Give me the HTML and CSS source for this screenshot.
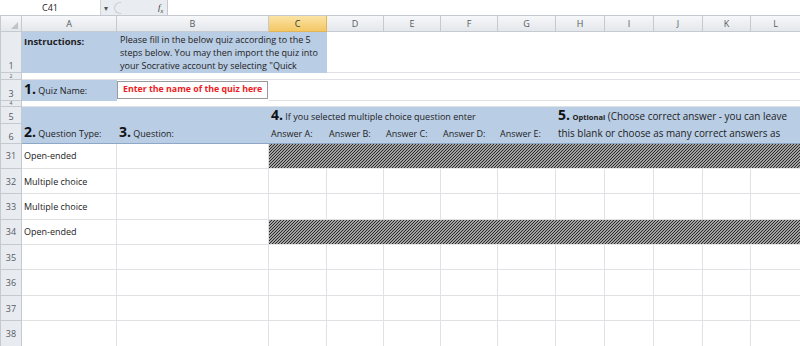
FILE: index.html
```html
<!DOCTYPE html>
<html lang="en">
<head>
    <meta charset="UTF-8">
    <title>Socrative Quiz Template</title>
    <link rel="stylesheet" href="styles.css">
</head>
<body>
    <div class="formula-bar">
        <div class="name-box">C41</div>
        <div class="name-drop">&#9662;</div>
        <div class="fx-area">
            <span class="fx-grip"></span>
            <span class="fx">f<sub>x</sub></span>
        </div>
        <div class="formula-input"></div>
    </div>

    <!-- shared hatch fill for the "not used" answer cells -->
    <svg class="defs" width="0" height="0">
        <defs>
            <pattern id="hatch" width="3" height="3" patternUnits="userSpaceOnUse">
                <rect width="3" height="3" fill="#a2a2a2"/>
                <rect x="0" y="2" width="1" height="1" fill="#2a2a2a"/>
                <rect x="1" y="1" width="1" height="1" fill="#2a2a2a"/>
                <rect x="2" y="0" width="1" height="1" fill="#2a2a2a"/>
            </pattern>
        </defs>
    </svg>

    <table class="sheet">
        <colgroup>
            <col class="c-hdr">
            <col class="c-a">
            <col class="c-b">
            <col class="c-c">
            <col class="c-d">
            <col class="c-e">
            <col class="c-f">
            <col class="c-g">
            <col class="c-h">
            <col class="c-i">
            <col class="c-j">
            <col class="c-k">
            <col class="c-l">
        </colgroup>
        <tr class="col-heads">
            <th class="corner"><span class="corner-mark"></span></th>
            <th>A</th>
            <th>B</th>
            <th class="active">C</th>
            <th>D</th>
            <th>E</th>
            <th>F</th>
            <th>G</th>
            <th>H</th>
            <th>I</th>
            <th>J</th>
            <th>K</th>
            <th>L</th>
        </tr>
        <tr class="r-instr">
            <th class="row-num">1</th>
            <td class="blue top"><b>Instructions:</b></td>
            <td class="blue top instr-text" colspan="2">Please fill in the below quiz according to the 5 steps below. You may then import the quiz into your Socrative account by selecting "Quick</td>
            <td colspan="10"></td>
        </tr>
        <tr class="r-thin">
            <th class="row-num"><div class="squash">2</div></th>
            <td colspan="12"></td>
        </tr>
        <tr class="r-name">
            <th class="row-num">3</th>
            <td class="blue"><span class="step">1.</span> Quiz Name:</td>
            <td class="name-cell"><div class="name-box-cell">Enter the name of the quiz here</div></td>
            <td colspan="10"></td>
        </tr>
        <tr class="r-thin r-thin-b">
            <th class="row-num"><div class="squash">4</div></th>
            <td colspan="12"></td>
        </tr>
        <tr class="r-head5">
            <th class="row-num">5</th>
            <td class="blue band-top"></td>
            <td class="blue band-top"></td>
            <td class="blue band-top" colspan="5"><span class="step">4.</span> If you selected multiple choice question enter</td>
            <td class="blue band-top opt" colspan="5"><span class="step">5.</span> <b class="tiny">Optional</b> (Choose correct answer - you can leave</td>
        </tr>
        <tr class="r-head6">
            <th class="row-num">6</th>
            <td class="blue band-bot"><span class="step">2.</span> Question Type:</td>
            <td class="blue band-bot"><span class="step">3.</span> Question:</td>
            <td class="blue band-bot">Answer A:</td>
            <td class="blue band-bot">Answer B:</td>
            <td class="blue band-bot">Answer C:</td>
            <td class="blue band-bot">Answer D:</td>
            <td class="blue band-bot">Answer E:</td>
            <td class="blue band-bot opt" colspan="5">this blank or choose as many correct answers as</td>
        </tr>
        <tr class="r-data">
            <th class="row-num">31</th>
            <td>Open-ended</td>
            <td></td>
            <td class="hatch" colspan="10"><svg class="hatch-fill"><rect width="100%" height="100%" fill="url(#hatch)"/></svg></td>
        </tr>
        <tr class="r-data">
            <th class="row-num">32</th>
            <td>Multiple choice</td>
            <td></td>
            <td></td><td></td><td></td><td></td><td></td><td></td><td></td><td></td><td></td><td></td>
        </tr>
        <tr class="r-data">
            <th class="row-num">33</th>
            <td>Multiple choice</td>
            <td></td>
            <td></td><td></td><td></td><td></td><td></td><td></td><td></td><td></td><td></td><td></td>
        </tr>
        <tr class="r-data">
            <th class="row-num">34</th>
            <td>Open-ended</td>
            <td></td>
            <td class="hatch" colspan="10"><svg class="hatch-fill"><rect width="100%" height="100%" fill="url(#hatch)"/></svg></td>
        </tr>
        <tr class="r-data">
            <th class="row-num">35</th>
            <td></td><td></td><td></td><td></td><td></td><td></td><td></td><td></td><td></td><td></td><td></td><td></td>
        </tr>
        <tr class="r-data">
            <th class="row-num">36</th>
            <td></td><td></td><td></td><td></td><td></td><td></td><td></td><td></td><td></td><td></td><td></td><td></td>
        </tr>
        <tr class="r-data">
            <th class="row-num">37</th>
            <td></td><td></td><td></td><td></td><td></td><td></td><td></td><td></td><td></td><td></td><td></td><td></td>
        </tr>
        <tr class="r-data">
            <th class="row-num">38</th>
            <td></td><td></td><td></td><td></td><td></td><td></td><td></td><td></td><td></td><td></td><td></td><td></td>
        </tr>
    </table>
</body>
</html>
```

FILE: styles.css
```css
* {
    margin: 0;
    padding: 0;
    box-sizing: border-box;
}
html, body {
    width: 800px;
    height: 346px;
    overflow: hidden;
}
body {
    background-color: #fff;
    color: #222;
    font-family: 'Open Sans', 'Noto Sans', sans-serif;
    font-size: 9px;
}
.defs {
    position: absolute;
}

/* formula bar */
.formula-bar {
    display: flex;
    height: 16px;
    background-color: #e9edf2;
    border-bottom: 1px solid #c4c9d0;
}
.name-box {
    width: 101px;
    background-color: #fff;
    border-right: 1px solid #cfd4da;
    text-align: center;
    line-height: 15px;
    font-size: 9px;
    color: #222;
}
.name-drop {
    width: 10px;
    font-size: 8px;
    line-height: 15px;
    color: #555;
    text-align: center;
}
.fx-area {
    width: 56px;
    display: flex;
    align-items: center;
}
.fx-grip {
    width: 7px;
    height: 12px;
    margin-left: 3px;
    border: 1px solid #c9ced5;
    border-right: none;
    border-radius: 6px 0 0 6px;
}
.fx {
    margin-left: 37px;
    font-family: 'Liberation Serif', serif;
    font-style: italic;
    font-size: 9px;
    color: #333;
}
.fx sub {
    font-size: 6px;
}
.formula-input {
    flex-grow: 1;
    background-color: #fff;
    border-left: 1px solid #c4c9d0;
}

/* grid */
.sheet {
    border-collapse: collapse;
    table-layout: fixed;
    width: 800px;
}
.c-hdr { width: 21px; }
.c-a { width: 95px; }
.c-b { width: 152px; }
.c-c { width: 58px; }
.c-d { width: 57px; }
.c-e { width: 57px; }
.c-f { width: 57px; }
.c-g { width: 58px; }
.c-h { width: 49px; }
.c-i { width: 49px; }
.c-j { width: 49px; }
.c-k { width: 48px; }
.c-l { width: 50px; }

.sheet td {
    border: 1px solid #dfe1e4;
    padding: 0 2px;
    white-space: nowrap;
    overflow: hidden;
    vertical-align: middle;
}
.sheet th {
    font-weight: normal;
    color: #555b63;
    border: 1px solid #c5cad1;
}
.col-heads th {
    height: 15px;
    font-size: 9px;
    background: linear-gradient(#f6f7f9, #e4e7eb);
    border-top: none;
}
.col-heads th.active {
    background: linear-gradient(#fbe3a4, #f3c764);
    border-color: #e1b659;
    color: #333;
}
.corner {
    position: relative;
}
.corner-mark {
    position: absolute;
    right: 3px;
    bottom: 2px;
    width: 0;
    height: 0;
    border-left: 7px solid transparent;
    border-bottom: 7px solid #c0c4ca;
}
.row-num {
    background-color: #e8ebef;
    font-size: 9px;
    text-align: center;
    vertical-align: bottom;
    border-left: none;
}
.squash {
    height: 5px;
    overflow: hidden;
    font-size: 5px;
    line-height: 5px;
}

/* rows */
.r-instr td {
    height: 41px;
}
.r-thin td, .r-thin th {
    height: 7px;
}
.r-thin-b td, .r-thin-b th {
    height: 5px;
}
.r-name td, .r-name th {
    height: 20px;
}
.r-head5 td, .r-head5 th {
    height: 17px;
}
.r-head6 td, .r-head6 th {
    height: 20px;
}
.r-data td, .r-data th {
    height: 25.4px;
}
.r-data th {
    vertical-align: middle;
}

.blue {
    background-color: #b9cde5;
    border-color: #b9cde5 !important;
}
.top {
    vertical-align: top !important;
    padding-top: 1px !important;
}
.instr-text {
    white-space: normal !important;
    line-height: 13px;
    color: #222;
    padding-left: 3px !important;
}
.r-instr b {
    font-size: 9.5px;
    display: block;
    margin-top: 2px;
}
.band-top {
    border-top: 1px solid #8ea7c6 !important;
    vertical-align: bottom !important;
}
.band-bot {
    border-bottom: 1px solid #8ea7c6 !important;
}
.step {
    font-size: 14px;
    font-weight: bold;
    line-height: 12px;
    color: #111;
}
.tiny {
    font-size: 7.5px;
}
.opt {
    padding-left: 2px !important;
    font-size: 9.9px;
}
.name-cell {
    padding: 1px 0 !important;
    border-color: #fff !important;
}
.name-box-cell {
    height: 18px;
    border: 1px solid #9a9a9a;
    background-color: #fff;
    color: #ec1c24;
    font-weight: bold;
    font-size: 8.8px;
    line-height: 15px;
    padding-left: 5px;
    white-space: nowrap;
    overflow: hidden;
}
.hatch {
    padding: 0 !important;
    border-color: #ffffff #dfe1e4 #e6e6e6 !important;
}
.hatch-fill {
    display: block;
    width: 100%;
    height: 24px;
}
```
